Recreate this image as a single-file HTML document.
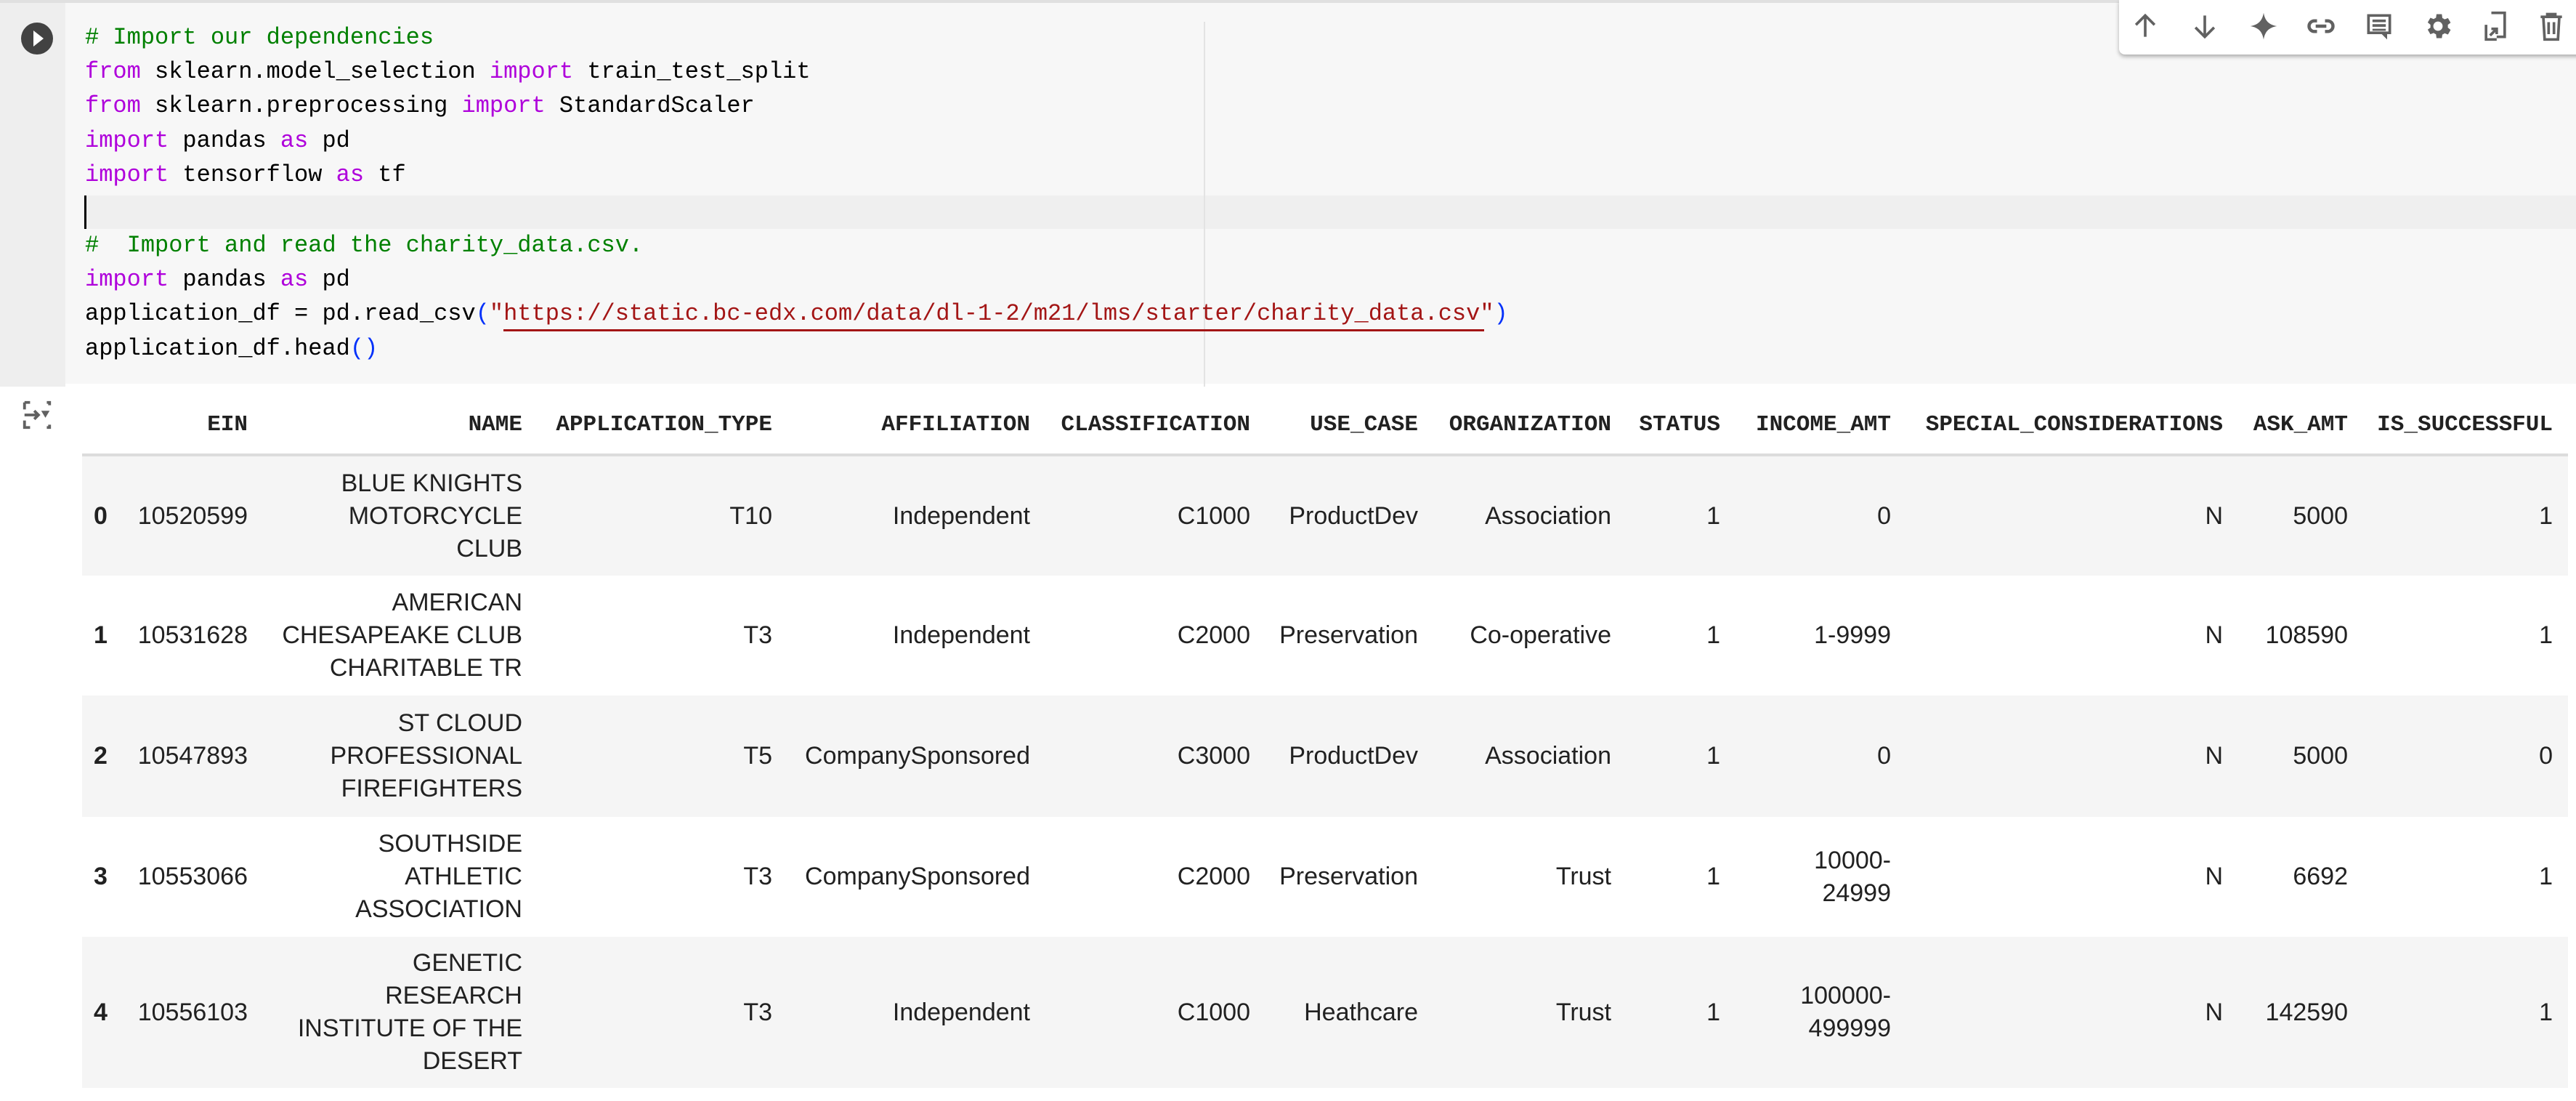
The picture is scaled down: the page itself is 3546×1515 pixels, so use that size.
<!DOCTYPE html>
<html><head><meta charset="utf-8"><style>
*{margin:0;padding:0;box-sizing:border-box}
body{width:3546px;height:1515px;background:#fff;position:relative;overflow:hidden;font-family:"Liberation Sans",Arial,sans-serif;color:#212121}
.code{position:absolute;left:0;top:0;width:3546px;height:528px;background:#f7f7f7;border-top:4px solid #e0e0e0}
.gut{position:absolute;left:0;top:0;width:90px;height:528px;background:#eeeeee}
.vl{position:absolute;left:1657px;top:26px;width:2px;height:502px;background:#e3e3e3}
.band{position:absolute;left:115px;top:265px;right:0;height:46px;background:#efefef}
.cur{position:absolute;left:116px;top:265px;width:3px;height:46px;background:#000}
.ln{position:absolute;left:117px;font-family:"Liberation Mono",monospace;font-size:32px;white-space:pre;line-height:47px;color:#000}
.cm{color:#008000}.kw{color:#af00db}.st{color:#a31515}.pb{color:#0431fa}
.tb{position:absolute;left:2917px;top:0;width:640px;height:75px;background:#fff;border-radius:0 0 0 8px;box-shadow:0 3px 6px rgba(0,0,0,.3)}
.ic{position:absolute;top:14px;width:44px;height:44px}
.row{position:absolute;left:113px;width:3422px}
.g{background:#f5f5f5}
.c{position:absolute;top:0;bottom:0;display:flex;align-items:center;justify-content:flex-end;text-align:right;font-size:34px;line-height:45px}
.h{font-family:"Liberation Mono",monospace;font-weight:bold;font-size:31px}
</style></head><body>
<div class="code">
<div class="gut"></div>
<div class="band"></div><div class="vl"></div><div class="cur"></div>
<svg style="position:absolute;left:27px;top:25px" width="48" height="48" viewBox="0 0 48 48"><circle cx="24" cy="24" r="22" fill="#424242"/><path d="M19 13 L33 24 L19 35 Z" fill="#fff"/></svg>
<div class="ln" style="top:24px"><span class="cm"># Import our dependencies</span></div>
<div class="ln" style="top:71px"><span class="kw">from</span> sklearn.model_selection <span class="kw">import</span> train_test_split</div>
<div class="ln" style="top:118px"><span class="kw">from</span> sklearn.preprocessing <span class="kw">import</span> StandardScaler</div>
<div class="ln" style="top:166px"><span class="kw">import</span> pandas <span class="kw">as</span> pd</div>
<div class="ln" style="top:213px"><span class="kw">import</span> tensorflow <span class="kw">as</span> tf</div>
<div class="ln" style="top:310px"><span class="cm">#  Import and read the charity_data.csv.</span></div>
<div class="ln" style="top:357px"><span class="kw">import</span> pandas <span class="kw">as</span> pd</div>
<div class="ln" style="top:404px">application_df = pd.read_csv<span class="pb">(</span><span class="st">"https://static.bc-edx.com/data/dl-1-2/m21/lms/starter/charity_data.csv"</span><span class="pb">)</span></div>
<div style="position:absolute;left:693px;top:449px;width:1350px;height:3px;background:#a31515"></div>
<div class="ln" style="top:452px">application_df.head<span class="pb">()</span></div>
</div>
<div class="tb">
<svg class="ic" style="left:14px" viewBox="0 0 24 24"><path d="M12 20V4M5 11l7-7 7 7" stroke="#616161" stroke-width="2" fill="none"/></svg>
<svg class="ic" style="left:96px" viewBox="0 0 24 24"><path d="M12 4v16M5 13l7 7 7-7" stroke="#616161" stroke-width="2" fill="none"/></svg>
<svg class="ic" style="left:177px" viewBox="0 0 24 24"><path d="M12 2C13 8 16 11 22 12 16 13 13 16 12 22 11 16 8 13 2 12 8 11 11 8 12 2Z" fill="#616161"/></svg>
<svg class="ic" style="left:256px" viewBox="0 0 24 24"><path d="M9 8H7a4 4 0 000 8h2M15 8h2a4 4 0 010 8h-2M8 12h8" stroke="#616161" stroke-width="2.4" fill="none"/></svg>
<svg class="ic" style="left:336px" viewBox="0 0 24 24"><path d="M3 3h18v15H18v4l-4-4H3z" fill="#616161"/><path d="M5 5h14v11H5z" fill="#fff"/><path d="M7 7h10v2H7zM7 10.5h10v2H7zM7 14h10v1.5H7z" fill="#616161"/></svg>
<svg class="ic" style="left:417px" viewBox="0 0 24 24"><path d="M19.4 13a7.5 7.5 0 000-2l2.1-1.6-2-3.5-2.5 1a7 7 0 00-1.7-1L14.9 3h-4l-.4 2.7a7 7 0 00-1.7 1l-2.5-1-2 3.5L6.4 11a7.5 7.5 0 000 2l-2.1 1.6 2 3.5 2.5-1a7 7 0 001.7 1l.4 2.9h4l.4-2.7a7 7 0 001.7-1l2.5 1 2-3.5zM12 15.5a3.5 3.5 0 110-7 3.5 3.5 0 010 7z" fill="#616161"/></svg>
<svg class="ic" style="left:496px" viewBox="0 0 24 24"><path d="M9 2h10v18h-6M5 11v11h8" stroke="#616161" stroke-width="2" fill="none"/><path d="M8 19l5-5M9 14h4v4" stroke="#616161" stroke-width="2" fill="none"/></svg>
<svg class="ic" style="left:573px" viewBox="0 0 24 24"><path d="M4 5h16M9 5V3h6v2M6 5l1 17h10l1-17" stroke="#616161" stroke-width="2" fill="none"/><path d="M10 9v9M14 9v9" stroke="#616161" stroke-width="2"/></svg>
</div>
<svg style="position:absolute;left:28px;top:548px" width="46" height="46" viewBox="0 0 24 24"><path d="M3 3h4M3 3v5M3 16v5h4M19 3h2v2M21 19v2h-2" stroke="#616161" stroke-width="2" fill="none"/><path d="M3 12h10M10 9l3 3-3 3" stroke="#616161" stroke-width="2" fill="none"/><path d="M15 9h6l-3 5z" fill="#616161"/></svg>
<div class="row" style="top:543px;height:83px">
<div class="c h" style="right:3194px">EIN</div><div class="c h" style="right:2816px">NAME</div><div class="c h" style="right:2472px">APPLICATION_TYPE</div><div class="c h" style="right:2117px">AFFILIATION</div><div class="c h" style="right:1814px">CLASSIFICATION</div><div class="c h" style="right:1583px">USE_CASE</div><div class="c h" style="right:1317px">ORGANIZATION</div><div class="c h" style="right:1167px">STATUS</div><div class="c h" style="right:932px">INCOME_AMT</div><div class="c h" style="right:475px">SPECIAL_CONSIDERATIONS</div><div class="c h" style="right:303px">ASK_AMT</div><div class="c h" style="right:21px">IS_SUCCESSFUL</div>
</div>
<div style="position:absolute;left:113px;top:624px;width:3422px;height:4px;background:#dcdcdc"></div>
<div class="row g" style="top:628px;height:164px">
<div class="c" style="left:16px;font-weight:bold">0</div><div class="c" style="right:3194px">10520599</div><div class="c" style="right:2816px">BLUE KNIGHTS<br>MOTORCYCLE<br>CLUB</div><div class="c" style="right:2472px">T10</div><div class="c" style="right:2117px">Independent</div><div class="c" style="right:1814px">C1000</div><div class="c" style="right:1583px">ProductDev</div><div class="c" style="right:1317px">Association</div><div class="c" style="right:1167px">1</div><div class="c" style="right:932px">0</div><div class="c" style="right:475px">N</div><div class="c" style="right:303px">5000</div><div class="c" style="right:21px">1</div>
</div>
<div class="row" style="top:792px;height:165px">
<div class="c" style="left:16px;font-weight:bold">1</div><div class="c" style="right:3194px">10531628</div><div class="c" style="right:2816px">AMERICAN<br>CHESAPEAKE CLUB<br>CHARITABLE TR</div><div class="c" style="right:2472px">T3</div><div class="c" style="right:2117px">Independent</div><div class="c" style="right:1814px">C2000</div><div class="c" style="right:1583px">Preservation</div><div class="c" style="right:1317px">Co-operative</div><div class="c" style="right:1167px">1</div><div class="c" style="right:932px">1-9999</div><div class="c" style="right:475px">N</div><div class="c" style="right:303px">108590</div><div class="c" style="right:21px">1</div>
</div>
<div class="row g" style="top:957px;height:167px">
<div class="c" style="left:16px;font-weight:bold">2</div><div class="c" style="right:3194px">10547893</div><div class="c" style="right:2816px">ST CLOUD<br>PROFESSIONAL<br>FIREFIGHTERS</div><div class="c" style="right:2472px">T5</div><div class="c" style="right:2117px">CompanySponsored</div><div class="c" style="right:1814px">C3000</div><div class="c" style="right:1583px">ProductDev</div><div class="c" style="right:1317px">Association</div><div class="c" style="right:1167px">1</div><div class="c" style="right:932px">0</div><div class="c" style="right:475px">N</div><div class="c" style="right:303px">5000</div><div class="c" style="right:21px">0</div>
</div>
<div class="row" style="top:1124px;height:165px">
<div class="c" style="left:16px;font-weight:bold">3</div><div class="c" style="right:3194px">10553066</div><div class="c" style="right:2816px">SOUTHSIDE<br>ATHLETIC<br>ASSOCIATION</div><div class="c" style="right:2472px">T3</div><div class="c" style="right:2117px">CompanySponsored</div><div class="c" style="right:1814px">C2000</div><div class="c" style="right:1583px">Preservation</div><div class="c" style="right:1317px">Trust</div><div class="c" style="right:1167px">1</div><div class="c" style="right:932px">10000-<br>24999</div><div class="c" style="right:475px">N</div><div class="c" style="right:303px">6692</div><div class="c" style="right:21px">1</div>
</div>
<div class="row g" style="top:1289px;height:208px">
<div class="c" style="left:16px;font-weight:bold">4</div><div class="c" style="right:3194px">10556103</div><div class="c" style="right:2816px">GENETIC<br>RESEARCH<br>INSTITUTE OF THE<br>DESERT</div><div class="c" style="right:2472px">T3</div><div class="c" style="right:2117px">Independent</div><div class="c" style="right:1814px">C1000</div><div class="c" style="right:1583px">Heathcare</div><div class="c" style="right:1317px">Trust</div><div class="c" style="right:1167px">1</div><div class="c" style="right:932px">100000-<br>499999</div><div class="c" style="right:475px">N</div><div class="c" style="right:303px">142590</div><div class="c" style="right:21px">1</div>
</div>
</body></html>
